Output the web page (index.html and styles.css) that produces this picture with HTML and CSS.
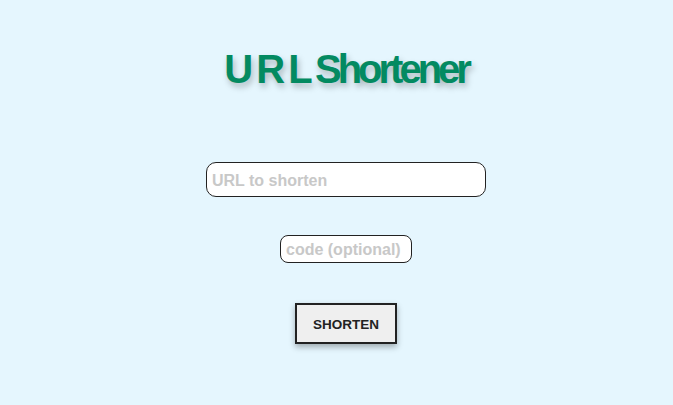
FILE: index.html
```html
<!DOCTYPE html>
<html>
<head>
<meta charset="utf-8">
<link rel="stylesheet" href="styles.css">
</head>
<body>
<main class="app">
  <h1 class="title">U R L Shortener</h1>
  <form class="form">
    <input class="url-input" type="text" placeholder="URL to shorten">
    <input class="code-input" type="text" placeholder="code (optional)">
    <button class="submit" type="button">SHORTEN</button>
  </form>
</main>
</body>
</html>
```
FILE: styles.css
```css
html, body {
  margin: 0;
  padding: 0;
  background: #e5f6fe;
  font-family: "Liberation Sans", Arial, sans-serif;
}
.app {
  display: flex;
  flex-direction: column;
  align-items: center;
  padding-top: 44px;
  padding-left: 19px;
  padding-bottom: 50px;
}
.title {
  margin: 0;
  font-size: 40px;
  font-weight: bold;
  letter-spacing: -4px;
  color: #038a61;
  text-shadow: 2px 4px 6px rgba(0, 0, 0, 0.25);
  line-height: 50px;
}
.form {
  display: flex;
  flex-direction: column;
  align-items: center;
  margin-top: 68px;
}
.url-input, .code-input {
  box-sizing: border-box;
  border: 1px solid #222;
  background: #fff;
  font-family: "Liberation Sans", Arial, sans-serif;
  font-weight: bold;
  font-size: 16px;
  outline: none;
}
.url-input::placeholder, .code-input::placeholder {
  color: #c8c8c8;
}
.url-input {
  width: 280px;
  height: 35px;
  border-radius: 10px;
  padding: 2px 5px 0;
}
.code-input {
  width: 132px;
  height: 28px;
  border-radius: 8px;
  padding: 1px 5px 0;
  margin-top: 38px;
}
.submit {
  margin-top: 40px;
  box-sizing: border-box;
  width: 102px;
  height: 41px;
  border: 2px solid #222;
  background: #efefef;
  font-family: "Liberation Sans", Arial, sans-serif;
  font-weight: bold;
  font-size: 13.5px;
  color: #222;
  padding: 2px 0 0;
  box-shadow: 0 3px 6px rgba(0, 0, 0, 0.3);
}
```
